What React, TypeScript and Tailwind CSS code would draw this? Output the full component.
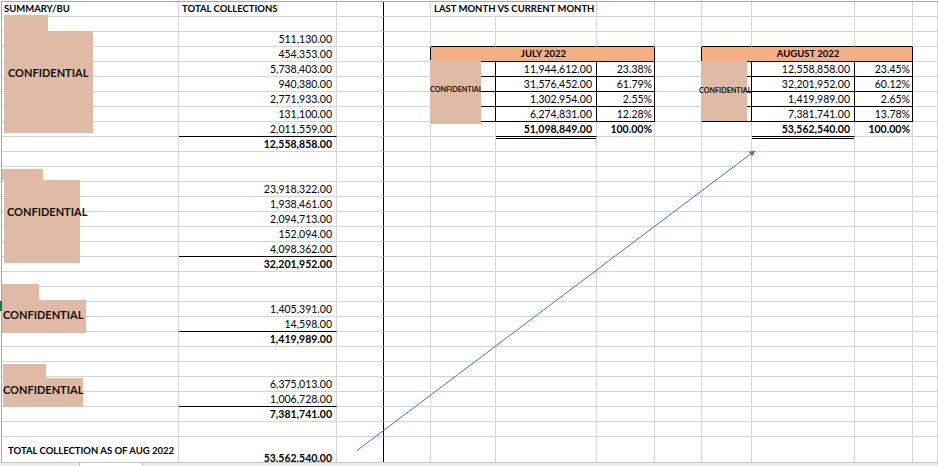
import clsx from "clsx";

type Cell = {
  t?: string;
  bold?: boolean;
  label?: boolean; // bold caption text, set smaller
  align?: "l" | "r" | "c";
  pad?: string;
  rb?: boolean; // black right border
  bb?: boolean; // black bottom border
  dbl?: boolean; // double underline
  noR?: boolean; // text spills over, gridline hidden
  span?: number;
  fill?: boolean;
  mid?: boolean;
};

const colB: Record<number, Cell> = {
  3: { t: "511,130.00" },
  4: { t: "454,353.00" },
  5: { t: "5,738,403.00" },
  6: { t: "940,380.00" },
  7: { t: "2,771,933.00" },
  8: { t: "131,100.00" },
  9: { t: "2,011,559.00", bb: true },
  10: { t: "12,558,858.00", bold: true },
  13: { t: "23,918,322.00" },
  14: { t: "1,938,461.00" },
  15: { t: "2,094,713.00" },
  16: { t: "152,094.00" },
  17: { t: "4,098,362.00", bb: true },
  18: { t: "32,201,952.00", bold: true },
  21: { t: "1,405,391.00" },
  22: { t: "14,598.00", bb: true },
  23: { t: "1,419,989.00", bold: true },
  26: { t: "6,375,013.00" },
  27: { t: "1,006,728.00", bb: true },
  28: { t: "7,381,741.00", bold: true },
  30: { t: "53,562,540.00", bold: true },
};

const july = [
  ["11,944,612.00", "23.38%"],
  ["31,576,452.00", "61.79%"],
  ["1,302,954.00", "2.55%"],
  ["6,274,831.00", "12.28%"],
];

const august = [
  ["12,558,858.00", "23.45%"],
  ["32,201,952.00", "60.12%"],
  ["1,419,989.00", "2.65%"],
  ["7,381,741.00", "13.78%"],
];

// columns: A B C D E F G H I J K L
function buildRow(r: number): Cell[] {
  const c: Cell[] = Array.from({ length: 12 }, () => ({}));

  if (r === 1) {
    c[0] = { t: "SUMMARY/BU", bold: true, label: true };
    c[1] = { t: "TOTAL COLLECTIONS", bold: true, label: true, pad: "pl-[3px]" };
    c[4] = { t: "LAST MONTH VS CURRENT MONTH", bold: true, label: true, noR: true, pad: "pl-[3px]" };
  }
  if (colB[r]) c[1] = { ...colB[r], align: "r", pad: "pr-[4px]" };

  // tables: July starts at col 4, August at col 8
  [4, 8].forEach((s, k) => {
    const rows = k === 0 ? july : august;
    if (r === 3) {
      c[s].bb = c[s + 1].bb = c[s + 2].bb = true;
    }
    if (r === 4) {
      c[s - 1].rb = true;
      c[s] = { t: k === 0 ? "JULY 2022" : "AUGUST 2022", bold: true, label: true, align: "c", span: 3, fill: true, rb: true, bb: true };
      c[s + 1] = { span: 0 };
      c[s + 2] = { span: 0 };
    }
    if (r >= 5 && r <= 8) {
      const [v, p] = rows[r - 5];
      c[s - 1].rb = true;
      c[s] = { rb: true, bb: true };
      c[s + 1] = { t: v, align: "r", pad: "pr-[4px]", rb: true, bb: true };
      c[s + 2] = { t: p, align: "r", pad: "pr-[2px]", rb: true, bb: true };
    }
    if (r === 9) {
      c[s + 1] = { t: k === 0 ? "51,098,849.00" : "53,562,540.00", bold: true, align: "r", pad: "pr-[4px]", bb: true, dbl: true };
      c[s + 2] = { t: "100.00%", bold: true, align: "r", pad: "pr-[2px]" };
    }
  });

  if (r === 30) {
    c[0] = { t: "TOTAL COLLECTION AS OF AUG 2022", bold: true, label: true, mid: true, pad: "pl-[6px]" };
  }
  c[2].rb = true;
  return c;
}

function SheetCell({ cell, tall }: { cell: Cell; tall: boolean }) {
  return (
    <div
      className={clsx(
        "relative flex min-w-0 whitespace-nowrap border-r border-b pl-[2px]",
        tall ? "h-[29px]" : "h-[15px]",
        cell.rb ? "border-r-black" : cell.noR ? "border-r-transparent" : "border-r-[#d4d4d4]",
        cell.bb ? "border-b-black" : "border-b-[#d4d4d4]",
        cell.mid ? "items-center" : "items-end",
        cell.align === "r" ? "justify-end" : cell.align === "c" ? "justify-center" : "justify-start",
        cell.bold && "font-bold",
        cell.label && "text-[9.5px]",
        cell.fill && "bg-[#f4b084]",
        cell.span === 3 && "col-span-3",
        cell.pad
      )}
    >
      {cell.t && <span>{cell.t}</span>}
      {cell.dbl && <div className="absolute left-0 right-0 bottom-[-3px] h-px bg-black" />}
    </div>
  );
}

function Redaction({ parts, text, small, tx, ty }: { parts: number[][]; text: string; small?: boolean; tx: number; ty: number }) {
  return (
    <>
      {parts.map(([x, y, w, h], i) => (
        <div key={i} className="absolute bg-[#dfbba5]" style={{ left: x, top: y, width: w, height: h }} />
      ))}
      <div
        className={clsx(
          "absolute whitespace-nowrap font-bold text-[#111]",
          small ? "text-[7.2px] leading-[10px]" : "text-[11px] leading-[14px]"
        )}
        style={{ left: tx, top: ty }}
      >
        {text}
      </div>
    </>
  );
}

export default function App() {
  const rows = Array.from({ length: 30 }, (_, i) => i + 1);
  return (
    <div className="relative h-[466px] w-[938px] overflow-hidden bg-white font-['Lato','Liberation_Sans',sans-serif] text-[10.5px] leading-[14px] tabular-nums text-black">
      <div className="flex h-full flex-col">
        <div className="flex-1 overflow-hidden pl-px pt-px">
          <div className="grid grid-cols-[177px_158px_47px_47px_65px_101px_58px_47px_50px_103px_58px_1fr] border-l border-t border-[#a6a6a6]">
            {rows.map((r) =>
              buildRow(r).map((cell, ci) =>
                cell.span === 0 ? null : <SheetCell key={`${r}-${ci}`} cell={cell} tall={r === 30} />
              )
            )}
          </div>
        </div>
        <div className="flex h-[4px] border-t border-[#c6c6c6] bg-[#ececec]">
          <div className="w-[79px]" />
          <div className="w-[64px] border-x border-[#bdbdbd] bg-white" />
          <div className="flex-1" />
        </div>
      </div>

      {/* redacted business unit labels */}
      <Redaction parts={[[4, 15, 44, 16], [4, 31, 89, 102]]} text="CONFIDENTIAL" tx={8} ty={66} />
      <Redaction parts={[[2, 169, 41, 11], [4, 180, 76, 83]]} text="CONFIDENTIAL" tx={7} ty={205} />
      <Redaction parts={[[2, 284, 37, 16], [2, 300, 84, 33]]} text="CONFIDENTIAL" tx={3} ty={308} />
      <Redaction parts={[[3, 364, 43, 14], [3, 378, 80, 29]]} text="CONFIDENTIAL" tx={3} ty={383} />
      <Redaction parts={[[430, 60, 51, 64]]} text="CONFIDENTIAL" small tx={430} ty={85} />
      <Redaction parts={[[701, 61, 46, 60]]} text="CONFIDENTIAL" small tx={699} ty={86} />

      <div className="absolute left-0 top-[301px] h-[10px] w-[2px] bg-[#217346]" />

      <svg className="pointer-events-none absolute left-0 top-0" width="938" height="462">
        <line x1="357" y1="450.5" x2="750.4" y2="154.2" stroke="#4472c4" strokeWidth="1" />
        <polygon points="755.5,150.5 752.2,156.6 748.6,151.8" fill="#4472c4" />
      </svg>
    </div>
  );
}
